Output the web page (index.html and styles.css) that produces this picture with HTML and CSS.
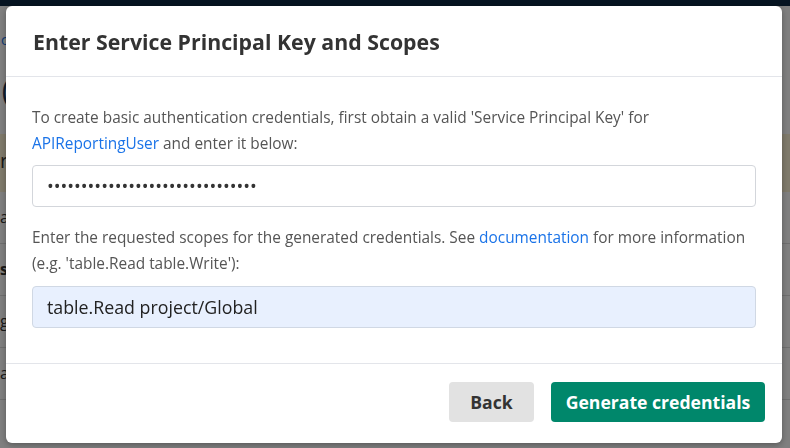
FILE: index.html
```html
<!DOCTYPE html>
<html lang="en">
<head>
<meta charset="utf-8">
<title>Enter Service Principal Key and Scopes</title>
<link rel="stylesheet" href="styles.css">
</head>
<body>
<div class="page">
  <div class="topbar"></div>
  <div class="crumb">c</div>
  <div class="big">Q</div>
  <div class="band">r</div>
  <div class="row">a</div>
  <div class="row strong">s</div>
  <div class="row">g</div>
  <div class="row">a</div>
</div>
<div class="overlay">
  <div class="modal" role="dialog">
    <div class="modal-header">
      <h2 class="modal-title">Enter Service Principal Key and Scopes</h2>
    </div>
    <div class="modal-body">
      <p class="help">To create basic authentication credentials, first obtain a valid 'Service Principal Key' for <a class="link" href="#">APIReportingUser</a> and enter it below:</p>
      <input class="field" type="password" value="1234567890123456789012345678901">
      <p class="help second">Enter the requested scopes for the generated credentials. See <a class="link" href="#">documentation</a> for more information (e.g. 'table.Read table.Write'):</p>
      <input class="field filled" type="text" value="table.Read project/Global">
    </div>
    <div class="modal-footer">
      <button class="btn btn-back" type="button">Back</button>
      <button class="btn btn-primary" type="button">Generate credentials</button>
    </div>
  </div>
</div>
</body>
</html>
```
FILE: styles.css
```css
* { box-sizing: border-box; }
html, body { margin: 0; padding: 0; }
body {
  width: 790px;
  height: 448px;
  overflow: hidden;
  font-family: "Open Sans", "Noto Sans", sans-serif;
  background: #fff;
}
.page {
  width: 790px;
  height: 448px;
  color: #333;
}
.topbar { height: 6px; background: #0b2742; }
.crumb { margin-top: 24px; height: 34px; padding-left: 1px; color: #1a73e8; font-size: 14px; }
.big { height: 70px; font-size: 48px; line-height: 56px; color: #1e3a5a; font-weight: 300; }
.band { height: 58px; background: #fff4d6; font-size: 20px; line-height: 54px; }
.row { height: 52px; font-size: 16px; line-height: 50px; border-bottom: 1px solid #ddd; }
.row.strong { font-weight: 700; }

.overlay {
  position: fixed;
  inset: 0;
  background: rgba(0, 0, 0, 0.5);
  padding: 6px 8px 5px 6px;
}
.modal {
  width: 776px;
  height: 437px;
  background: #fff;
  border-radius: 6px;
  display: flex;
  flex-direction: column;
  box-shadow: 0 2px 6px rgba(0,0,0,0.3);
}
.modal-header {
  height: 71px;
  padding: 0 27px;
  display: flex;
  align-items: center;
  border-bottom: 1px solid #e3e5ea;
}
.modal-title {
  margin: 0;
  font-size: 21.3px;
  font-weight: 700;
  color: #333;
}
.modal-body {
  padding: 28px 26px 0;
  height: 287px;
  border-bottom: 1px solid #e3e5ea;
}
.help {
  margin: 0;
  font-size: 15.4px;
  line-height: 26px;
  color: #555;
}
.help.second { margin-top: 18px; }
.link { color: #1a73e8; text-decoration: none; }
.field {
  display: block;
  width: 724px;
  height: 42px;
  margin-top: 8px;
  padding: 0 14px;
  border: 1px solid #d3d6db;
  border-radius: 4px;
  background: #fff;
  font-family: "Open Sans", "Noto Sans", sans-serif;
  font-size: 18px;
  color: #333;
  outline: none;
}
.field.filled {
  margin-top: 9px;
  background: #e8f0fe;
  border-color: #d0d8e4;
  font-size: 17.8px;
  color: #222;
}
.modal-footer {
  flex: 1;
  display: flex;
  justify-content: flex-end;
  align-items: flex-start;
  gap: 17px;
  padding: 18px 17px 0;
}
.btn {
  height: 40px;
  border: none;
  border-radius: 4px;
  font-family: "Open Sans", "Noto Sans", sans-serif;
  font-size: 17.6px;
  font-weight: 700;
  cursor: pointer;
}
.btn-back {
  width: 85px;
  background: #e2e2e2;
  color: #333;
}
.btn-primary {
  width: 214px;
  background: #00876b;
  color: #fff;
}
```
